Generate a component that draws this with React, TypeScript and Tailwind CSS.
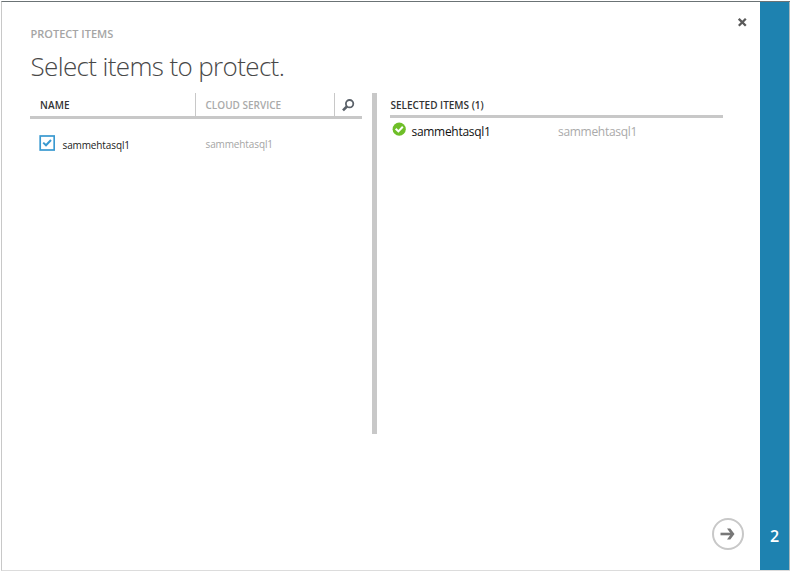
import React from "react";

function SearchIcon() {
  return (
    <svg width="13" height="13" viewBox="0 0 13 13" fill="none" stroke="#5a6169">
      <circle cx="7.6" cy="4.7" r="3.7" strokeWidth="1.8" />
      <path d="M4.9 7.5 1 11.4" strokeWidth="2.6" />
    </svg>
  );
}

function CheckBadge() {
  return (
    <svg width="14" height="14" viewBox="0 0 14 14" fill="none">
      <circle cx="7.2" cy="7.2" r="6.6" fill="#6ebe28" />
      <path d="M3.7 6.7 6.4 9.4 10.8 4.8" stroke="#fff" strokeWidth="2" />
    </svg>
  );
}

export default function App() {
  return (
    <div className="flex h-[571px] w-[791px] flex-col bg-white pt-px font-['Open_Sans','Noto_Sans',sans-serif]">
      <div className="ml-px mr-px flex h-[570px] border-b border-l border-t border-b-[#dcdcdc] border-l-[#c8c8c8] border-t-[#6b7375]">
        <main className="flex w-[758px] flex-col pl-[28px]">
          <header className="flex h-[91px] justify-between">
            <div>
              <p className="mt-[24px] h-[16px] whitespace-nowrap pl-[0.5px] text-[11px] font-semibold leading-[16px] text-[#a5a5a5]">
                PROTECT ITEMS
              </p>
              <h1 className="mt-[6px] whitespace-nowrap pl-[0.5px] text-[26px] font-light leading-[36px] tracking-[-0.63px] text-[#484848]">
                Select items to protect.
              </h1>
            </div>
            <button aria-label="Close" className="mr-[13px] mt-[16px] h-[9px] w-[9px]">
              <svg width="9" height="9" viewBox="0 0 9 9" stroke="#5a5a5a" strokeWidth="2.3">
                <path d="M.8 .8 7.8 7.8M7.8 .8 .8 7.8" />
              </svg>
            </button>
          </header>

          <div className="flex h-[341px]">
            <section className="w-[332px]">
              <div className="flex h-[26px] border-b-[3px] border-[#c8c8c8] text-[10px] font-semibold leading-[24px]">
                <div className="w-[165px] pl-[10px] tracking-[0.1px] text-[#333]">NAME</div>
                <div className="w-[139px] border-l border-[#c8c8c8] pl-[9.5px] text-[#aaa]">CLOUD SERVICE</div>
                <div className="flex flex-1 items-center border-l border-[#c8c8c8] pl-[7px] pt-[2px]">
                  <SearchIcon />
                </div>
              </div>
              <div className="flex pl-[9px] pt-[16px] text-[10px] leading-[16px] tracking-[-0.12px]">
                <svg width="16" height="16" viewBox="0 0 16 16" fill="none" stroke="#3999d0">
                  <rect x="1.2" y="1" width="14" height="14" strokeWidth="1.7" />
                  <path d="M4.2 7.6 7 10.3 12 5" strokeWidth="2" />
                </svg>
                <span className="ml-[7.5px] w-[143px] pt-[2px] text-[#222]">sammehtasql1</span>
                <span className="pt-px text-[#a5a5a5]">sammehtasql1</span>
              </div>
            </section>

            <div className="ml-[10px] w-[5px] bg-[#c8c8c8]" />

            <section className="ml-[13px] w-[333px]">
              <h2 className="h-[25px] border-b-[3px] border-[#c8c8c8] pl-[0.5px] text-[10px] font-semibold leading-[24px] text-[#333]">
                SELECTED ITEMS (1)
              </h2>
              <div className="flex pl-[2px] pt-[4px] text-[12px] leading-[20px] tracking-[-0.3px]">
                <CheckBadge />
                <span className="ml-[5.5px] w-[146.5px] text-[#111]">sammehtasql1</span>
                <span className="text-[#aaa]">sammehtasql1</span>
              </div>
            </section>
          </div>

          <footer className="flex flex-1 justify-end pr-[16px] pt-[84px]">
            <button aria-label="Next" className="h-[32px] w-[32px]">
              <svg width="32" height="32" viewBox="0 0 32 32" fill="none">
                <circle cx="16" cy="16" r="15" stroke="#c8c8c8" strokeWidth="2" />
                <path d="M8.5 16H21" stroke="#777" strokeWidth="2.6" />
                <path d="M15 10.5H18.3L22.5 16 18.3 21.5H15L19 16Z" fill="#777" />
              </svg>
            </button>
          </footer>
        </main>

        <aside className="flex w-[30px] flex-col justify-end border-r border-[#a9b8bd] bg-[#1e82b0] pb-[24px] text-center text-[16px] font-semibold leading-[20px] text-white">
          2
        </aside>
      </div>
    </div>
  );
}
